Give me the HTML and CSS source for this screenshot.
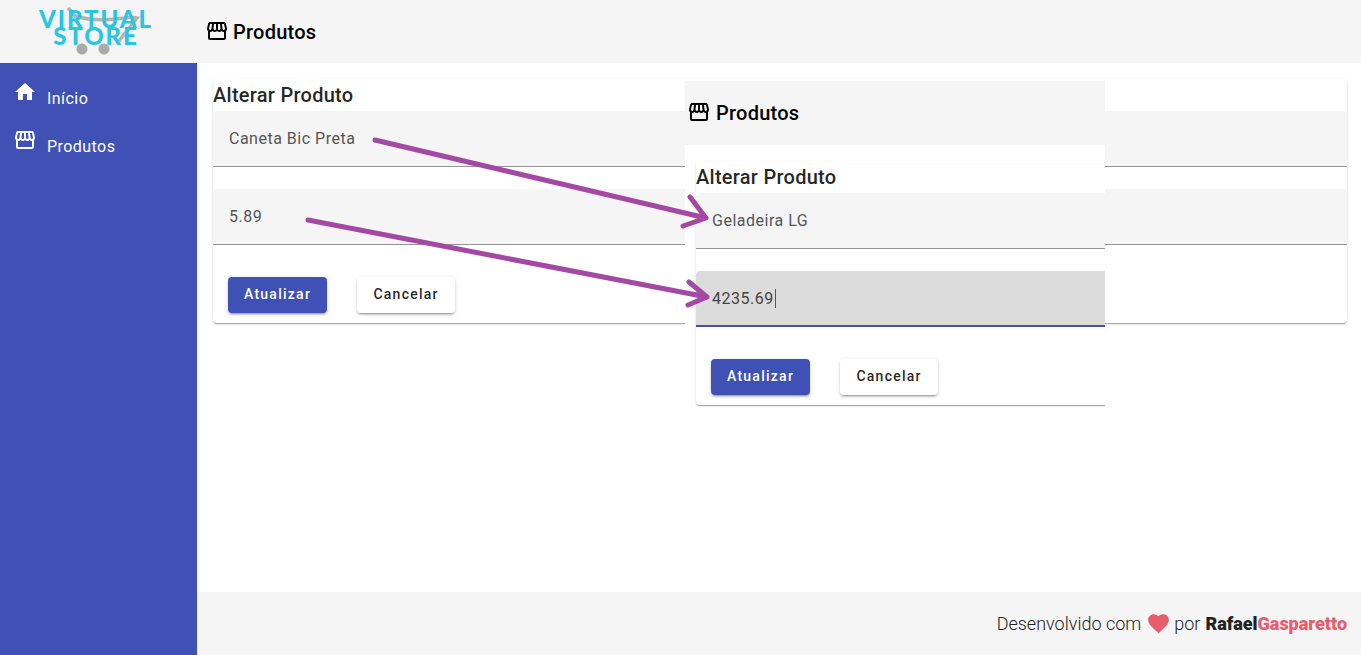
FILE: index.html
```html
<!DOCTYPE html>
<html lang="pt-BR">
<head>
  <meta charset="UTF-8">
  <title>Virtual Store - Produtos</title>
  <link rel="stylesheet" href="styles.css">
</head>
<body>
  <svg width="0" height="0" class="icon-defs">
    <symbol id="icon-home" viewBox="0 0 24 24"><path d="M10 20v-6h4v6h5v-8h3L12 3 2 12h3v8z"/></symbol>
    <symbol id="icon-store" viewBox="0 0 24 24"><path d="M21.9 8.89l-1.05-4.37c-.22-.9-1-1.52-1.91-1.52H5.05c-.9 0-1.69.63-1.9 1.52L2.1 8.89c-.24 1.02-.02 2.06.62 2.88.08.11.19.19.28.29V19c0 1.1.9 2 2 2h14c1.1 0 2-.9 2-2v-6.94c.09-.09.2-.18.28-.28.64-.82.87-1.87.62-2.89zm-2.99-3.9l1.05 4.37c.1.42.01.84-.25 1.17-.14.18-.44.47-.94.47-.61 0-1.14-.49-1.21-1.14L16.98 5l1.93-.01zM13 5h1.96l.54 4.52c.05.39-.07.78-.33 1.07-.22.26-.54.41-.95.41-.67 0-1.22-.59-1.22-1.31V5zM8.49 9.52L9.04 5H11v4.69c0 .72-.55 1.31-1.29 1.31-.34 0-.65-.15-.89-.41-.25-.29-.37-.68-.33-1.07zm-4.45-.16L5.05 5h1.97l-.58 4.86c-.08.65-.6 1.14-1.21 1.14-.49 0-.8-.29-.93-.47-.27-.32-.36-.75-.26-1.17zM5 19v-6.03c.08.01.15.03.23.03.87 0 1.66-.36 2.24-.95.6.6 1.4.95 2.31.95.87 0 1.65-.36 2.23-.93.59.57 1.39.93 2.29.93.84 0 1.64-.35 2.24-.95.58.59 1.37.95 2.24.95.08 0 .15-.02.23-.03V19H5z"/></symbol>
  </svg>

  <div class="app">
    <div class="logo-area">
      <div class="logo">
        <svg class="logo-cart" width="114" height="56" viewBox="0 0 114 56">
          <path d="M29 8 L36 16 Q58 23 92 17 L98 18 L80 41" fill="none" stroke="#b4b4b4" stroke-width="3.5"/>
          <circle cx="43" cy="49" r="5.5" fill="#aaa"/>
          <circle cx="65" cy="49" r="5.5" fill="#aaa"/>
        </svg>
        <div class="logo-line">VIRTUAL</div>
        <div class="logo-line">STORE</div>
      </div>
    </div>

    <header class="topbar">
      <svg class="icon"><use href="#icon-store"/></svg>
      <h1>Produtos</h1>
    </header>

    <nav class="sidebar">
      <a class="nav-item"><svg class="icon"><use href="#icon-home"/></svg><span>Início</span></a>
      <a class="nav-item"><svg class="icon"><use href="#icon-store"/></svg><span>Produtos</span></a>
    </nav>

    <main class="content">
      <section class="card">
        <h2>Alterar Produto</h2>
        <div class="field">Caneta Bic Preta</div>
        <div class="field">5.89</div>
        <div class="actions">
          <button class="btn btn-primary">Atualizar</button>
          <button class="btn">Cancelar</button>
        </div>
      </section>
    </main>

    <footer class="footer">
      <span>Desenvolvido com</span>
      <svg class="heart" viewBox="0 0 24 24"><path d="M12 21.35l-1.45-1.32C5.4 15.36 2 12.28 2 8.5 2 5.42 4.42 3 7.5 3c1.74 0 3.41.81 4.5 2.09C13.09 3.81 14.76 3 16.5 3 19.58 3 22 5.42 22 8.5c0 3.78-3.4 6.86-8.55 11.54L12 21.35z"/></svg>
      <span>por</span>
      <span class="author">Rafael<b>Gasparetto</b></span>
    </footer>
  </div>

  <!-- second screenshot pasted over the page -->
  <div class="paste">
    <header class="topbar">
      <svg class="icon"><use href="#icon-store"/></svg>
      <h1>Produtos</h1>
    </header>
    <div class="content">
      <section class="card">
        <h2>Alterar Produto</h2>
        <div class="field">Geladeira LG</div>
        <div class="field field-focus">4235.69<span class="caret"></span></div>
        <div class="actions">
          <button class="btn btn-primary">Atualizar</button>
          <button class="btn">Cancelar</button>
        </div>
      </section>
    </div>
  </div>

  <svg class="arrows" width="1361" height="655" viewBox="0 0 1361 655">
    <path d="M375 140 L706 218 M690 197 L706 218 L683 226"/>
    <path d="M308 220 L707 297 M689 282 L707 297 L688 305"/>
  </svg>
</body>
</html>
```

FILE: styles.css
```css
body {
  margin: 0;
  font-family: Roboto, "Liberation Sans", sans-serif;
  background-color: #fff;
  overflow: hidden;
}

.icon-defs {
  position: absolute;
}

.app {
  display: grid;
  grid-template-columns: 197px 1fr;
  grid-template-rows: 63px 1fr 63px;
  height: 655px;
}

.icon {
  width: 24px;
  height: 24px;
  flex: none;
  fill: currentColor;
}

/* logo */
.logo-area {
  background-color: #f5f5f5;
  padding: 10px 0 0 39px;
}

.logo {
  position: relative;
  width: 114px;
  font-family: Lato, sans-serif;
  font-weight: 900;
  font-size: 24px;
  line-height: 17px;
  letter-spacing: 1.9px;
  color: #29c6e4;
  text-align: center;
  white-space: nowrap;
}

.logo-cart {
  position: absolute;
  left: 0;
  top: -10px;
}

.logo-line {
  position: relative;
}

/* top bar */
.topbar {
  display: flex;
  align-items: center;
  gap: 4px;
  padding: 0 0 0 5px;
  height: 63px;
  background-color: #f5f5f5;
  color: #000;
  margin: 0;
}

.topbar .icon {
  margin: -2px 0 0 3px;
}

.topbar h1 {
  margin: 0;
  font-size: 20px;
  font-weight: 500;
  letter-spacing: .25px;
}

/* side menu */
.sidebar {
  grid-row: 2 / 4;
  background-color: #3f51b5;
  padding-top: 11px;
  color: #fff;
}

.nav-item {
  display: flex;
  align-items: center;
  gap: 10px;
  height: 36px;
  padding: 6px 13px;
  font-size: 16px;
  letter-spacing: .45px;
}

.nav-item .icon {
  align-self: flex-start;
}

/* content */
.content {
  padding: 16px 14px 0 16px;
}

.card {
  background-color: #fff;
  border-radius: 4px;
  height: 244px;
  box-shadow: 0 2px 1px -1px rgba(0,0,0,.2), 0 1px 1px 0 rgba(0,0,0,.14), 0 1px 3px 0 rgba(0,0,0,.12);
}

.card h2 {
  margin: 0;
  height: 32px;
  font-size: 20px;
  font-weight: 500;
  line-height: 32px;
  letter-spacing: .27px;
  color: rgba(0,0,0,.87);
}

.field {
  box-sizing: border-box;
  height: 56px;
  margin-bottom: 22px;
  padding: 0 16px;
  background-color: #f5f5f5;
  border-bottom: 1px solid #949494;
  border-radius: 4px 4px 0 0;
  font-size: 16px;
  line-height: 55px;
  letter-spacing: .5px;
  color: #555;
}

.field-focus {
  background-color: #dcdcdc;
  border-bottom: 2px solid #3f51b5;
  color: #444;
}

.caret {
  display: inline-block;
  width: 1px;
  height: 19px;
  margin-left: 1px;
  background-color: #3f51b5;
  vertical-align: -4px;
}

.actions {
  display: flex;
  gap: 30px;
  padding: 10px 0 0 15px;
}

.btn {
  min-width: 98px;
  height: 36px;
  padding: 0 16px 2px;
  border: none;
  border-radius: 4px;
  background-color: #fff;
  color: rgba(0,0,0,.87);
  font-family: inherit;
  font-size: 14px;
  font-weight: 500;
  letter-spacing: 1.25px;
  box-shadow: 0 3px 1px -2px rgba(0,0,0,.2), 0 2px 2px 0 rgba(0,0,0,.14), 0 1px 5px 0 rgba(0,0,0,.12);
}

.btn-primary {
  background-color: #3f51b5;
  color: #fff;
}

/* footer */
.footer {
  grid-column: 2;
  display: flex;
  align-items: center;
  justify-content: flex-end;
  gap: 6px;
  padding-right: 14px;
  background-color: #f5f5f5;
  font-size: 18px;
  font-weight: 300;
  color: #222;
}

.heart {
  width: 25px;
  height: 25px;
  margin: 0 -3px 0 -1px;
  fill: #e85d6e;
}

.author {
  margin-left: -1px;
  font-weight: 900;
  color: #222;
}

.author b {
  font-weight: 900;
  color: #e85d6e;
}

/* pasted screenshot and hand drawn arrows */
.paste {
  position: absolute;
  left: 685px;
  top: 81px;
  width: 420px;
  height: 330px;
  overflow: hidden;
  background-color: #fff;
}

.paste .topbar {
  height: 64px;
  padding-left: 0;
  gap: 5px;
}

.paste .topbar .icon {
  margin-left: 2px;
}

.paste .content {
  width: 1134px;
  padding-right: 0;
  padding-left: 11px;
}

.arrows {
  position: absolute;
  left: 0;
  top: 0;
  fill: none;
  stroke: #a349a4;
  stroke-width: 5;
  stroke-linecap: round;
  stroke-linejoin: round;
}
```
